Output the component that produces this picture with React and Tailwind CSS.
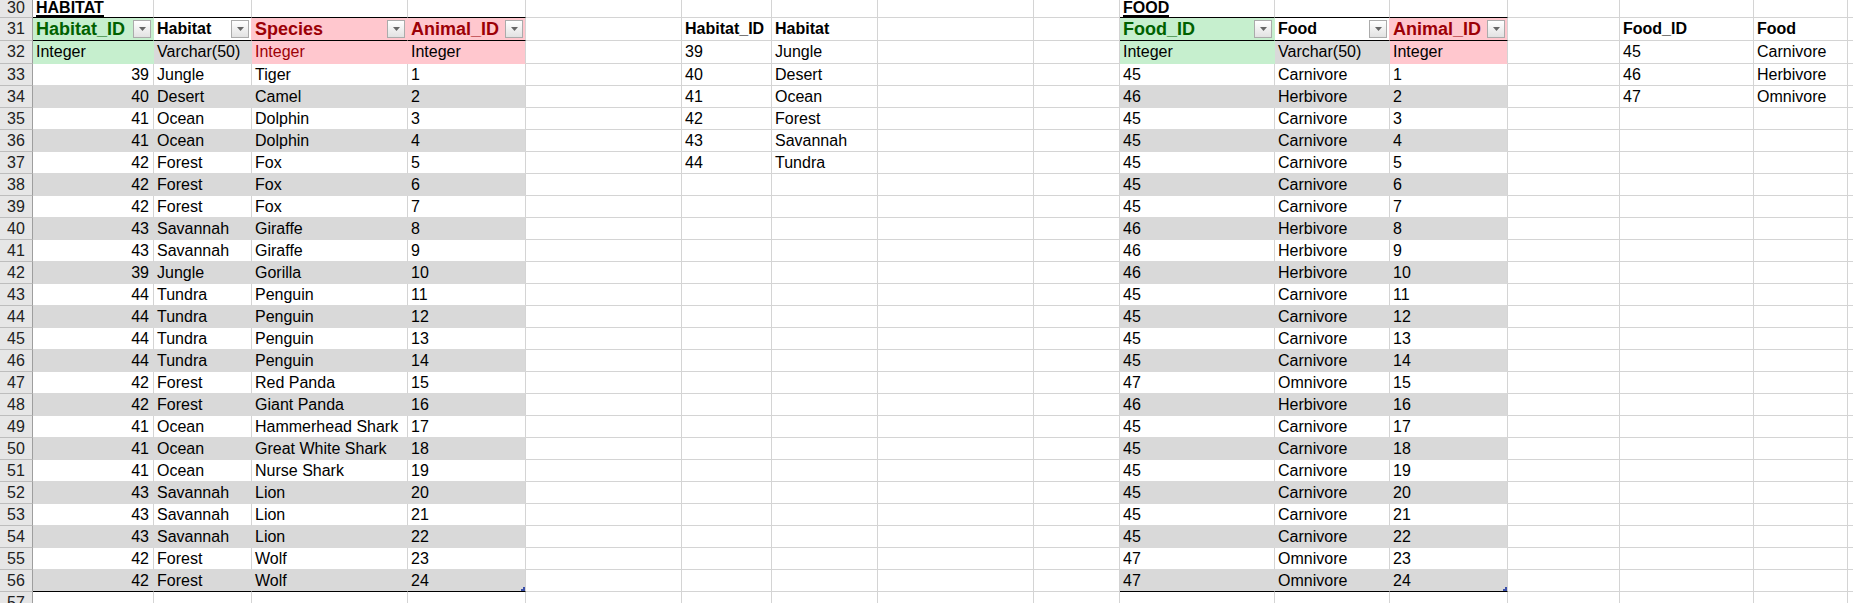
import React from "react";

// column widths include the 1px right gridline
const COLS =
  "grid-cols-[33px_121px_98px_156px_118px_156px_90px_106px_156px_86px_155px_115px_118px_112px_134px_94px_1fr]";
const ROWS = "grid-rows-[18px_23px_23px_repeat(25,22px)]";

const BG = {
  w: "bg-white",
  g: "bg-[#d9d9d9]",
  green: "bg-[#c6efce]",
  pink: "bg-[#ffc7ce]",
  rh: "bg-[#e6e6e6]",
};
const BR = {
  grid: "border-r-[#d4d4d4]",
  g: "border-r-[#d9d9d9]",
  green: "border-r-[#c6efce]",
  pink: "border-r-[#ffc7ce]",
  rh: "border-r-[#9e9e9e]",
};
const BB = {
  grid: "border-b-[#d4d4d4]",
  g: "border-b-[#d9d9d9]",
  green: "border-b-[#c6efce]",
  pink: "border-b-[#ffc7ce]",
  black: "border-b-black",
  rh: "border-b-[#bdbdbd]",
};

const habitats = [
  [39, "Jungle", "Tiger"],
  [40, "Desert", "Camel"],
  [41, "Ocean", "Dolphin"],
  [41, "Ocean", "Dolphin"],
  [42, "Forest", "Fox"],
  [42, "Forest", "Fox"],
  [42, "Forest", "Fox"],
  [43, "Savannah", "Giraffe"],
  [43, "Savannah", "Giraffe"],
  [39, "Jungle", "Gorilla"],
  [44, "Tundra", "Penguin"],
  [44, "Tundra", "Penguin"],
  [44, "Tundra", "Penguin"],
  [44, "Tundra", "Penguin"],
  [42, "Forest", "Red Panda"],
  [42, "Forest", "Giant Panda"],
  [41, "Ocean", "Hammerhead Shark"],
  [41, "Ocean", "Great White Shark"],
  [41, "Ocean", "Nurse Shark"],
  [43, "Savannah", "Lion"],
  [43, "Savannah", "Lion"],
  [43, "Savannah", "Lion"],
  [42, "Forest", "Wolf"],
  [42, "Forest", "Wolf"],
];

const foodName = { 45: "Carnivore", 46: "Herbivore", 47: "Omnivore" };
const foods = [45, 46, 45, 45, 45, 45, 45, 46, 46, 46, 45, 45, 45, 45, 47, 46, 45, 45, 45, 45, 45, 45, 47, 47];

const habitatList = [
  [39, "Jungle"],
  [40, "Desert"],
  [41, "Ocean"],
  [42, "Forest"],
  [43, "Savannah"],
  [44, "Tundra"],
];

function FilterButton() {
  return (
    <div className="ml-auto flex h-[18px] w-[18px] shrink-0 items-center justify-center border border-[#ababab] bg-linear-to-b from-white to-[#e2e2e2]">
      <svg width="7" height="4" viewBox="0 0 7 4">
        <path d="M0 0H7L3.5 4Z" fill="#666" />
      </svg>
    </div>
  );
}

function ResizeHandle() {
  return (
    <svg className="absolute -bottom-[2px] right-0" width="6" height="6" viewBox="0 0 6 6">
      <path d="M4 0H6V6H0V4H2V2H4Z" fill="#3c50a8" />
    </svg>
  );
}

function blank() {
  return { text: "", bg: "w", br: "grid", bb: "grid" };
}

function buildRow(r) {
  const cells = Array.from({ length: 17 }, blank);
  cells[0] = { text: String(r), bg: "rh", br: "rh", bb: "rh", rowHead: true };

  if (r === 30) {
    cells[1] = { ...cells[1], text: "HABITAT", heading: true };
    cells[10] = { ...cells[10], text: "FOOD", heading: true };
    [1, 2, 3, 4, 10, 11, 12].forEach((c) => (cells[c].bb = "black"));
  }

  if (r === 31) {
    cells[1] = { text: "Habitat_ID", bg: "green", br: "green", bb: "black", color: "text-[#006100]", big: true, filter: true };
    cells[2] = { text: "Habitat", bg: "w", br: "pink", bb: "black", bold: true, filter: true };
    cells[3] = { text: "Species", bg: "pink", br: "pink", bb: "black", color: "text-[#9c0006]", big: true, filter: true };
    cells[4] = { text: "Animal_ID", bg: "pink", br: "grid", bb: "black", color: "text-[#9c0006]", big: true, filter: true };
    cells[6] = { ...blank(), text: "Habitat_ID", bold: true };
    cells[7] = { ...blank(), text: "Habitat", bold: true };
    cells[10] = { text: "Food_ID", bg: "green", br: "green", bb: "black", color: "text-[#006100]", big: true, filter: true };
    cells[11] = { text: "Food", bg: "w", br: "pink", bb: "black", bold: true, filter: true };
    cells[12] = { text: "Animal_ID", bg: "pink", br: "grid", bb: "black", color: "text-[#9c0006]", big: true, filter: true };
    cells[14] = { ...blank(), text: "Food_ID", bold: true };
    cells[15] = { ...blank(), text: "Food", bold: true };
  }

  if (r === 32) {
    cells[1] = { text: "Integer", bg: "green", br: "green", bb: "green" };
    cells[2] = { text: "Varchar(50)", bg: "g", br: "g", bb: "g" };
    cells[3] = { text: "Integer", bg: "pink", br: "pink", bb: "pink", color: "text-[#9c0006]" };
    cells[4] = { text: "Integer", bg: "pink", br: "grid", bb: "pink" };
    cells[10] = { text: "Integer", bg: "green", br: "green", bb: "green" };
    cells[11] = { text: "Varchar(50)", bg: "g", br: "g", bb: "g" };
    cells[12] = { text: "Integer", bg: "pink", br: "grid", bb: "pink" };
  }

  if (r >= 32 && r <= 37) {
    const [id, name] = habitatList[r - 32];
    cells[6] = { ...blank(), text: String(id) };
    cells[7] = { ...blank(), text: name };
  }
  if (r >= 32 && r <= 34) {
    const id = 45 + (r - 32);
    cells[14] = { ...blank(), text: String(id) };
    cells[15] = { ...blank(), text: foodName[id] };
  }

  if (r >= 33 && r <= 56) {
    const i = r - 33;
    const band = r % 2 === 0;
    const bg = band ? "g" : "w";
    const bb = r === 56 ? "black" : "g";
    const mk = (text, last, extra = {}) => ({
      text,
      bg,
      br: band && !last ? "g" : "grid",
      bb,
      ...extra,
    });
    const [hid, hname, species] = habitats[i];
    cells[1] = mk(String(hid), false, { right: true });
    cells[2] = mk(hname, false);
    cells[3] = mk(species, false);
    cells[4] = mk(String(i + 1), true, { handle: r === 56 });
    const fid = foods[i];
    cells[10] = mk(String(fid), false);
    cells[11] = mk(foodName[fid], false);
    cells[12] = mk(String(i + 1), true, { handle: r === 56 });
  }

  return cells;
}

function Cell({ c, r }) {
  const base = `relative flex whitespace-nowrap border-r border-b ${BG[c.bg]} ${BR[c.br]} ${BB[c.bb]}`;
  if (c.rowHead) {
    return (
      <div className={`${base} ${r === 30 ? "items-start" : "items-center"} justify-center text-[16px] text-[#222]`}>
        <span className={r === 30 ? "leading-[15px]" : ""}>{c.text}</span>
      </div>
    );
  }
  if (c.heading) {
    return (
      <div className={`${base} items-start pl-[3px]`}>
        <span className="inline-block border-b-2 border-black text-[16px] font-bold leading-[15px]">{c.text}</span>
      </div>
    );
  }
  return (
    <div
      className={`${base} items-center overflow-hidden pr-[2px] ${c.right ? "justify-end pr-[4px]" : "pl-[3px]"} ${
        c.color || "text-black"
      } ${c.big ? "text-[18px] font-bold" : "text-[16px]"} ${c.bold ? "font-bold" : ""}`}
    >
      <span>{c.text}</span>
      {c.filter && <FilterButton />}
      {c.handle && <ResizeHandle />}
    </div>
  );
}

export default function App() {
  const rows = [];
  for (let r = 30; r <= 57; r++) rows.push(r);

  return (
    <div className="h-[603px] w-[1853px] overflow-hidden bg-white font-['Liberation_Sans',Arial,sans-serif]">
      <div className={`grid ${COLS} ${ROWS}`}>
        {rows.map((r) =>
          buildRow(r).map((c, ci) => <Cell key={`${r}-${ci}`} c={c} r={r} />)
        )}
      </div>
    </div>
  );
}
